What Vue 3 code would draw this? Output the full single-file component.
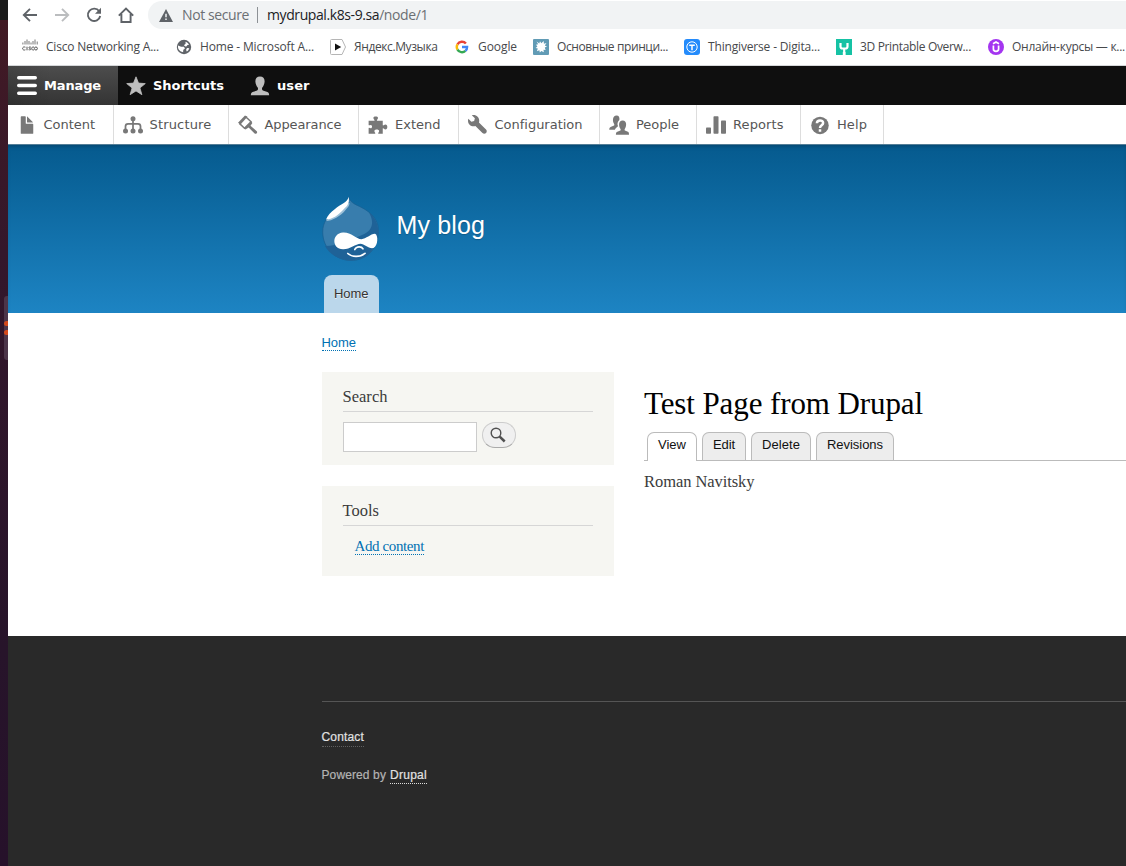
<script setup>
const bookmarks = [
  { icon: 'cisco', label: 'Cisco Networking A...', text: 113, cell: 154 },
  { icon: 'globe', label: 'Home - Microsoft A...', text: 114, cell: 154 },
  { icon: 'play', label: 'Яндекс.Музыка', text: 83.5, cell: 124 },
  { icon: 'google', label: 'Google', text: 39, cell: 79 },
  { icon: 'spark', label: 'Основные принци...', text: 111, cell: 151 },
  { icon: 'thing', label: 'Thingiverse - Digita...', text: 112, cell: 152 },
  { icon: 'mini', label: '3D Printable Overw...', text: 111, cell: 152 },
  { icon: 'course', label: 'Онлайн-курсы — к...', text: 113, cell: 138 },
]

const tray = [
  { icon: 'file', label: 'Content', text: 51.5, cell: 106 },
  { icon: 'chart', label: 'Structure', text: 62, cell: 115 },
  { icon: 'brush', label: 'Appearance', text: 77, cell: 130 },
  { icon: 'puzzle', label: 'Extend', text: 45.5, cell: 100 },
  { icon: 'wrench', label: 'Configuration', text: 88, cell: 141 },
  { icon: 'people', label: 'People', text: 43, cell: 97 },
  { icon: 'bars', label: 'Reports', text: 50.5, cell: 104 },
  { icon: 'help', label: 'Help', text: 30, cell: 83 },
]

const tabs = [
  { label: 'View', text: 28, active: true },
  { label: 'Edit', text: 22 },
  { label: 'Delete', text: 38 },
  { label: 'Revisions', text: 56 },
]

// Adjusts tracking so that a label fills the given width in pixels.
const vFit = {
  mounted(el, { value }) {
    const natural = el.getBoundingClientRect().width
    el.style.letterSpacing = `${(value - natural) / el.textContent.length}px`
  },
}
</script>

<template>
  <div class="screen">
    <aside class="desktop"><div class="dock"><i></i><i></i></div></aside>
    <div class="window">
      <div class="address-row">
        <svg class="nav" viewBox="0 0 16 16"><path d="M15 8H2M8 1.8 1.8 8 8 14.2" /></svg>
        <svg class="nav off" viewBox="0 0 16 16"><path d="M1 8h13M8 1.8 14.2 8 8 14.2" /></svg>
        <svg class="nav" viewBox="0 0 16 16"><path d="M13.2 4.3A6.2 6.2 0 1 0 14.2 9" /><path class="solid" d="M15 .8v6H9z" /></svg>
        <svg class="nav" viewBox="0 0 16 16"><path d="M.8 8.7 8 1.5l7.2 7.2M3.4 7v8h9.2V7" /></svg>
        <div class="omnibox">
          <svg class="warn" viewBox="0 0 14 13"><path fill="#5f6368" d="M7 0l7 13H0z" /><path stroke="#f1f3f4" stroke-width="1.5" d="M7 4.7v3.6M7 9.6v1.5" /></svg>
          <span v-fit="67" class="insecure">Not secure</span>
          <i class="divider"></i>
          <span v-fit="161" class="url">mydrupal.k8s-9.sa<span class="path">/node/1</span></span>
        </div>
      </div>

      <div class="bookmarks">
        <div v-for="b in bookmarks" :key="b.label" class="bookmark" :style="{ width: b.cell + 'px' }">
          <svg viewBox="0 0 16 16">
            <template v-if="b.icon === 'cisco'">
              <path stroke="#666" stroke-width=".9" d="M.9 3.500v2M3 2V5.500M5 .5v5M7 2V5.500M9 3.500v2M11 2V5.500M13 .5v5M15.200 2.500v3" />
              <path fill="none" stroke="#555" stroke-width="1" d="M3.400 8.200C1.800 7.500.6 8.300.6 9.500s1.300 2 2.800 1.300M5 7.700v3.600M8.900 8.200c-2-.7-2.800.5-1.200 1.200 2 .6 1.100 1.800-1.100 1.300M12 8.200c-1.500-.7-2.300.2-2.300 1.300s1 2 2.300 1.300" />
              <circle cx="13.900" cy="9.500" r="1.500" fill="none" stroke="#555" />
            </template>
            <template v-else-if="b.icon === 'globe'">
              <circle cx="8" cy="8" r="7.200" fill="#5f6368" />
              <path fill="#fff" d="M2 6.600l3.100 1.200 3-.1.8 2-1.600 1.100-.2 2.400C3.800 12.600 1.700 10.600 2 6.600zM9.500 2.800c1.800.6 2.900 1.700 3.400 3.100l-1.400.2-1.500 1.600-2.200-1.500 1.800-1.400zM11 9l2.300.3c-.4 1.600-1.300 2.600-2.600 3.300l-.6-1.800z" />
            </template>
            <template v-else-if="b.icon === 'play'">
              <path fill="#fff" stroke="#b5b5b5" d="M1.500.5H12L15.500 8 12 15.500H1.500q-1 0-1-1v-13q0-1 1-1z" />
              <path fill="#111" d="M5 4.500l6.200 3.500L5 11.500z" />
            </template>
            <g v-else-if="b.icon === 'google'" fill="none" stroke-width="2.400">
              <path stroke="#ea4335" d="M3.500 5.400A5.100 5.100 0 0 1 11.900 4.600" />
              <path stroke="#fbbc05" d="M3.500 5.400a5.100 5.100 0 0 0 0 5.200" />
              <path stroke="#34a853" d="M3.500 10.600a5.100 5.100 0 0 0 7.900 1.300" />
              <path stroke="#4285f4" d="M11.400 11.900A5 5 0 0 0 13.100 8H8" />
            </g>
            <template v-else-if="b.icon === 'spark'">
              <rect width="16" height="16" rx="1" fill="#619bb5" />
              <path fill="#fff" d="M3.500 2.500l2.800 2L7 2.300l1.300 2L10.700 2l.2 2.700 2.600-.7-1.700 2.600 2.200.9-2.200 1.100.8 2.400-2.100-.2.3 2.400-2.400-1.300-1.600 1.600-.4-2.200-2.500 1 .9-2.700-2.200-.5 1.800-1.600-1.400-1.800 2.200-.4z" />
            </template>
            <template v-else-if="b.icon === 'thing'">
              <rect width="16" height="16" rx="3" fill="#248bfb" />
              <g fill="none" stroke="#fff"><circle cx="8" cy="8" r="5.200" /><path stroke-width="1.500" d="M5.200 6.300h5.600M8 6.300v5" /></g>
            </template>
            <template v-else-if="b.icon === 'mini'">
              <path fill="#15c2a4" d="M0 0h16v16H9.500v-3H6.800v3H0z" />
              <path fill="none" stroke="#fff" stroke-width="2.200" d="M4.500 4v3.500Q4.500 9.500 6.500 9.500h3q2 0 2-2V4M8.200 9.500v6.500" />
            </template>
            <template v-else>
              <circle cx="8" cy="8" r="8" fill="#a435f0" />
              <path fill="none" stroke="#fff" stroke-width="1.700" d="M5.400 6.500v3.600Q5.400 12.400 8 12.400t2.600-2.300V6.500M5 4.700l3-1.800 3 1.800" />
            </template>
          </svg>
          <span v-fit="b.text">{{ b.label }}</span>
        </div>
      </div>

      <nav class="toolbar">
        <a class="item manage">
          <svg viewBox="0 0 20 20"><path stroke="#fff" stroke-width="3.400" stroke-linecap="round" d="M1.700 1.700h16.600M1.700 9.500h16.600M1.700 17.300h16.600" /></svg>
          <span v-fit="57">Manage</span>
        </a>
        <a class="item shortcuts">
          <svg viewBox="0 0 20 20"><path fill="#bebebe" stroke="#bebebe" stroke-width=".8" stroke-linejoin="round" d="M10 .8l2.500 6.300 6.800.5-5.400 4.300 2 6.800L10 14.900l-5.900 3.800 2-6.800L.7 7.600l6.800-.5z" /></svg>
          <span v-fit="71">Shortcuts</span>
        </a>
        <a class="item user">
          <svg viewBox="0 0 20 20"><path fill="#bebebe" d="M10 .5c3.200 0 4.800 2.300 4.600 5.200-.2 2.700-1.200 4.300-2.300 5.800-.7 1.400-.2 2.600 1.300 3.300l3.800 1.300c1.200.5 1.600 1.400 1.800 3.100H.8c.2-1.700.6-2.600 1.800-3.100l3.800-1.300c1.500-.7 2-1.900 1.300-3.300C6.600 10 5.600 8.400 5.400 5.700 5.200 2.800 6.800.5 10 .5z" /></svg>
          <span v-fit="32.500">user</span>
        </a>
      </nav>

      <nav class="tray">
        <a v-for="t in tray" :key="t.label" :style="{ width: t.cell + 'px' }">
          <svg viewBox="0 0 16 16" fill="#787878">
            <path v-if="t.icon === 'file'" d="M12.500 7h-5c-.3 0-.5-.2-.5-.5v-5c0-.3-.2-.5-.5-.5h-3c-.3 0-.5.2-.5.5v13c0 .3.200.5.5.5h9c.3 0 .5-.2.5-.5v-7c0-.3-.2-.5-.5-.5zM8.500 6h4c.3 0 .3-.2.1-.4L8.400 1.400C8.200 1.200 8 1.200 8 1.500v4c0 .3.200.5.5.5z" />
            <template v-else-if="t.icon === 'chart'">
              <path fill="none" stroke="#787878" stroke-width="1.400" d="M8 3v9M2 12V9q0-2 2-2h8q2 0 2 2v3" />
              <circle cx="8" cy="3" r="2" /><circle cx="2" cy="12.700" r="2" /><circle cx="8" cy="12.700" r="2" /><circle cx="14" cy="12.700" r="2" />
            </template>
            <template v-else-if="t.icon === 'brush'">
              <path d="M0 6.200 5.600.300 7.600 1.400 2 7.500z" />
              <path fill="none" stroke="#787878" stroke-width="1.200" d="M5.900 1.200 10.400 5.400 5.200 10.600 1.100 6.700" />
              <path d="M10.800 5.300l.7 1-1.500 2.200 5 4.400c1 1.100-.5 2.800-1.700 1.800L8.500 10 6 11.600l-1.200-1z" />
            </template>
            <path v-else-if="t.icon === 'puzzle'" d="M.5 4.500h4.700c.3-.8-.9-1.100-.9-2.200C4.300.9 8 .9 8 2.300c0 1.100-1.200 1.400-.8 2.200h4.600v3.700c.7.500 1-.7 2.100-.7 2.100 0 2.100 4 0 4-1.100 0-1.400-1.300-2.100-.8V15H8.300c-.6-.6.6-1.100.6-2.200 0-1.600-3.800-1.600-3.800 0 0 1.100 1.200 1.600.6 2.200H.5v-4.500c.4-.7 1 .1 1.700.1 1.400 0 1.400-2.700 0-2.700-.7 0-1.300.8-1.700.1z" />
            <path v-else-if="t.icon === 'wrench'" d="M14.416 11.586l-5.666-5.665c.15-.449.252-.921.252-1.421C9.002 2.015 6.986 0 4.500 0c-.505 0-.981.102-1.434.255l2.431 2.431-.588 2.196-2.196.588L.268 3.025C.106 3.489 0 3.981 0 4.500c0 2.486 2.014 4.500 4.500 4.500.5 0 .972-.102 1.421-.251l5.667 5.665c.781.781 2.047.781 2.828 0s.781-2.047 0-2.828z" />
            <template v-else-if="t.icon === 'people'">
              <path d="M6 .300c2 0 2.600 1.700 2.300 3.600C7 5 6.300 6.800 7.200 8.900c-1 .8-1.800 1.400-2.500 2.800H.200c.1-1.500.4-2 1.500-2.400l1.900-.7c.9-.5.8-1 .3-1.900C2.800 5.200 2.600.300 6 .300z" />
              <path d="M10.900 4.300c3.600 0 3.200 4.700 1.800 6.600-.4.700-.4 1.300.5 1.700l1.900.7c.7.300.9.900.9 2.400H5.500c.1-1.500.3-2.100 1.200-2.400l1.900-.7c1-.4.900-1 .5-1.700C7.700 9 7.300 4.300 10.900 4.300z" />
            </template>
            <g v-else-if="t.icon === 'bars'"><rect y="10" width="4" height="5" rx=".6" /><rect x="6" y="1" width="4" height="14" rx=".6" /><rect x="12" y="4.400" width="4" height="10.600" rx=".6" /></g>
            <template v-else>
              <circle cx="8" cy="8.300" r="7" />
              <path fill="none" stroke="#fff" stroke-width="2" d="M5.500 6.600C5.600 3.600 10.500 3.600 10.500 6.400 10.500 8.200 8 8.200 8 10.300M8 11.300v2" />
            </template>
          </svg>
          <span v-fit="t.text">{{ t.label }}</span>
        </a>
      </nav>

      <header class="header">
        <div class="branding">
          <svg class="logo" viewBox="0 0 57 65">
            <path fill="#387dad" stroke="#185e91" stroke-width=".7" d="M26.700 1C28.500 8 36 9 43 13.400 52 19 56.500 26 56.500 35.500 56.500 53 44 64.500 29 64.500S.7 52.500.7 36C.7 26.500 5.500 20 13 14 20 9 26.500 8 26.700 1z" />
            <path fill="#1f6297" d="M47 16.500C53 27 50 35 40 39 28 44 16 50 3 50 8 59 18 64.300 29 64.300 45 64.300 56.300 52 56.300 35.500 56.300 28 53 21 47 16.500z" />
            <path fill="#9cc0d8" d="M4 25C10 25 19 20 23.500 14 25.500 11.500 27.500 10 27.500 7L22 8z" />
            <path fill="#fff" d="M26.700.800C25.500 7 18.500 8 13 13 8.500 16.500 5.500 19.500 4 23.500 10 23.500 16.500 19 21 14 24 10.500 28 9 26.700.800z" />
            <path fill="#fff" d="M21 36.500C29 36 34 43 39.500 43.200 44 43 49 37.600 53 37.800 56.500 39 56 50 51.500 52 46.500 53 42.500 47.700 38.500 47.700 33.500 47.700 28 53.500 21 53.300 9.500 53 9.500 37.200 21 36.500z" />
            <path fill="none" stroke="#fff" stroke-width="1.700" stroke-linecap="round" d="M32.800 53.500C34.500 50 39.500 50 41 52.800M25.800 57.500C30 61.400 38 61.400 43 57.400" />
          </svg>
          <span v-fit="88.500" class="site-name">My blog</span>
        </div>
        <a class="home-tab"><span v-fit="34.500">Home</span></a>
      </header>

      <main class="main">
        <div class="breadcrumb"><a v-fit="34.500" class="link">Home</a></div>
        <div class="columns">
          <aside class="sidebar">
            <section class="block search">
              <h2><span v-fit="45">Search</span></h2>
              <div class="search-form">
                <input type="text" aria-label="Search" />
                <button aria-label="Search"><svg viewBox="0 0 16 16"><circle cx="6" cy="6" r="4.800" fill="none" stroke="#505050" stroke-width="1.400" /><path stroke="#505050" stroke-width="2.500" d="M9.700 9.700l5 4.800" /></svg></button>
              </div>
            </section>
            <section class="block tools">
              <h2><span v-fit="36.500">Tools</span></h2>
              <a v-fit="69.500" class="link add">Add content</a>
            </section>
          </aside>
          <article class="content">
            <h1><span v-fit="279">Test Page from Drupal</span></h1>
            <div class="tabs">
              <a v-for="t in tabs" :key="t.label" :class="{ active: t.active }"><span v-fit="t.text">{{ t.label }}</span></a>
            </div>
            <p><span v-fit="110.500">Roman Navitsky</span></p>
          </article>
        </div>
      </main>

      <footer class="footer">
        <div class="footer-inner">
          <div><a v-fit="42.500" class="contact">Contact</a></div>
          <div class="powered"><span v-fit="64.500">Powered by</span><a v-fit="37">Drupal</a></div>
        </div>
      </footer>
    </div>
  </div>
</template>

<style>
html, body { margin: 0; overflow: hidden; background: #fff; }
</style>

<style scoped>
* { box-sizing: border-box; }
.screen { display: flex; width: 1126px; height: 866px; overflow: hidden; font-family: "Liberation Sans", Arial, sans-serif; }
.screen span, .screen a { white-space: nowrap; }
.desktop { flex: none; width: 8px; height: 866px; padding: 296px 0 0 4px; background: linear-gradient(#1b1b1b 0 20px, #421a24 20px, #34172b 250px, #27142a 650px, #26112a); }
.dock { width: 4px; height: 64px; padding-top: 25px; background: #4c3549; border-radius: 3px 0 0 3px; }
.dock i { display: block; width: 4px; height: 5px; margin-bottom: 4px; background: #d4491b; border-radius: 4px 0 0 4px; }
.window { flex: none; display: flex; flex-direction: column; width: 1118px; height: 866px; overflow: hidden; }

.address-row { flex: none; display: flex; align-items: center; height: 30px; padding-left: 14px; }
.nav { flex: none; width: 16px; height: 16px; margin-right: 16px; fill: none; stroke: #5f6368; stroke-width: 1.9; }
.nav:nth-of-type(4) { margin-right: 14px; }
.nav.off { stroke: #bbbdbf; }
.nav .solid { fill: #5f6368; stroke: none; }
.omnibox { display: flex; align-items: center; flex: none; width: 1000px; height: 28px; padding-left: 11px; border-radius: 14px; background: #f1f3f4; font: 14px/20px "Open Sans", sans-serif; color: #202124; }
.warn { width: 14px; height: 13px; margin-right: 9px; }
.insecure, .path { color: #6b6f73; }
.divider { width: 1px; height: 16px; margin: 0 9px 0 8px; background: #8d9195; }

.bookmarks { flex: none; display: flex; align-items: center; height: 36px; padding: 0 0 1px 14px; border-bottom: 1px solid #d5d7d9; overflow: hidden; }
.bookmark { flex: none; display: flex; align-items: center; gap: 8px; font: 12px/18px "Open Sans", sans-serif; color: #47494c; }
.bookmark svg { flex: none; width: 16px; height: 16px; }

.toolbar { flex: none; display: flex; height: 39px; background: #0f0f0f; color: #fff; font: bold 13px/39px "DejaVu Sans", Verdana, sans-serif; }
.item { display: flex; align-items: center; gap: 7px; padding-left: 8px; }
.item svg { width: 20px; height: 20px; }
.manage { width: 110px; padding-left: 9px; background: linear-gradient(90deg, rgba(0,0,0,.1), transparent 40%), linear-gradient(#4d4d4d, #343434); }
.shortcuts { width: 124px; }
.tray { flex: none; display: flex; height: 39px; color: #565656; font: 13px/39px "DejaVu Sans", Verdana, sans-serif; background: #fff; }
.tray a { flex: none; display: flex; align-items: center; gap: 7px; padding-left: 8.5px; border-right: 1px solid #ddd; }
.tray a:nth-child(n + 6), .tray a:nth-child(4) { padding-left: 9px; }
.tray svg { width: 20px; height: 20px; }

.header { flex: none; height: 169px; padding: 52px 0 0 314px; background: linear-gradient(#055a8e, #1d84c3); box-shadow: inset 0 1px #547e97, inset 0 4px 4px -2px rgba(0,0,0,.25); }
.branding { display: flex; align-items: flex-start; height: 79px; }
.logo { width: 57px; height: 65px; margin-right: 17.5px; }
.site-name { font-size: 25px; line-height: 30px; margin-top: 14px; color: #fff; text-shadow: 0 1px 1px rgba(0,0,0,.2); }
.home-tab { display: block; width: 55px; height: 38px; margin-left: 2px; padding-left: 10px; border-radius: 8px 8px 0 0; background: #bbd7eb; color: #333; font-size: 13px; line-height: 37px; text-shadow: 0 1px #eee; }
.home-tab span, h1 span, h2 span, p span { display: inline-block; }

.main { flex: none; height: 323px; padding-left: 313.5px; }
.breadcrumb { height: 59px; padding-top: 22px; font-size: 13px; }
.link { display: inline-block; color: #0071b3; line-height: 14px; border-bottom: 1px dotted #0071b3; }
.columns { display: flex; gap: 30px; }
.sidebar { flex: none; width: 292.5px; }
.block { padding: 15px 21px 0; background: #f6f6f2; font-family: "Liberation Serif", Georgia, serif; }
.search { height: 93px; margin-bottom: 21px; }
.tools { height: 90px; }
h2 { height: 25px; margin: 0 0 10px; border-bottom: 1px solid #d6d6d6; font-size: 16.5px; font-weight: normal; line-height: 19px; color: #3b3b3b; }
.search-form { display: flex; gap: 5px; }
input { width: 134px; height: 30px; border: 1px solid #ccc; background: #fff; }
button { display: flex; justify-content: center; align-items: center; width: 34px; height: 26px; padding: 0 1px 1px 0; border: 1px solid #ccc; border-bottom-color: #aaa; border-radius: 13px; background: #f0f0f0; }
button svg { width: 16px; height: 16px; }
.add { margin: 2px 0 0 12px; font-size: 15px; line-height: 16px; }
.content { flex: 1; padding-top: 1px; font-family: "Liberation Serif", Georgia, serif; }
h1 { height: 59px; margin: 0; padding-top: 13px; font-size: 31px; font-weight: normal; line-height: 36px; color: #000; }
.tabs { display: flex; gap: 5px; height: 29px; padding-left: 3px; border-bottom: 1px solid #bbb; font: 13px/24px "Liberation Sans", Arial, sans-serif; color: #111; }
.tabs a { height: 28px; padding: 0 10px; border: 1px solid #bbb; border-bottom: 0; border-radius: 7px 7px 0 0; background: #ededed; }
.tabs a span { display: inline-block; }
.tabs .active { height: 29px; background: #fff; }
p { margin: 11px 0 0; font-size: 16.5px; line-height: 20px; color: #3b3b3b; }

.footer { flex: none; height: 230px; padding: 65px 0 0 313.5px; background: #292929; color: #b4b4b4; font-size: 12px; }
.footer-inner { padding-top: 28px; border-top: 1px solid #555; }
.footer-inner > div { height: 38px; line-height: 15px; }
.footer span, .footer a { display: inline-block; -webkit-text-stroke: .2px; }
.footer a { color: #e2e2e2; }
.contact { height: 17px; border-bottom: 1px dotted #606060; }
.powered { display: flex; gap: 4px; }
.powered a { height: 16px; border-bottom: 1px dotted #ddd; }
</style>
